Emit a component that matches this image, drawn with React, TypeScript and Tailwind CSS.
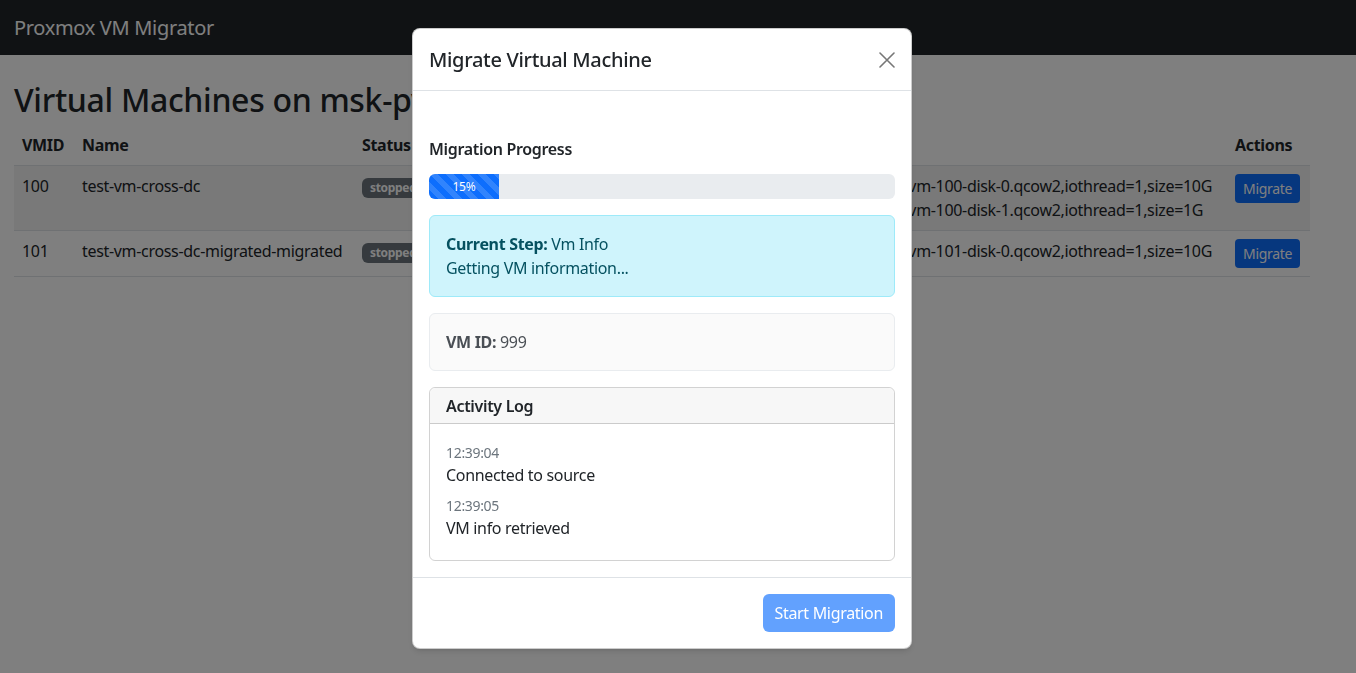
const vms = [
  {
    id: "100",
    name: "test-vm-cross-dc",
    status: "stopped",
    memory: "2048 MB",
    disks: [
      "scsi0: local:100/vm-100-disk-0.qcow2,iothread=1,size=10G",
      "scsi1: local:100/vm-100-disk-1.qcow2,iothread=1,size=1G",
    ],
  },
  {
    id: "101",
    name: "test-vm-cross-dc-migrated-migrated",
    status: "stopped",
    memory: "2048 MB",
    disks: ["scsi0: local:101/vm-101-disk-0.qcow2,iothread=1,size=10G"],
  },
];

const logs = [
  { time: "12:39:04", text: "Connected to source" },
  { time: "12:39:05", text: "VM info retrieved" },
];

function VmTable() {
  return (
    <table className="w-[1296px] table-fixed border-collapse text-left text-[#212529]">
      <colgroup>
        <col className="w-[60px]" />
        <col className="w-[280px]" />
        <col className="w-[110px]" />
        <col className="w-[120px]" />
        <col />
        <col className="w-[83px]" />
      </colgroup>
      <thead>
        <tr className="border-b border-[#dee2e6]">
          <th className="p-2 font-bold">VMID</th>
          <th className="p-2 font-bold">Name</th>
          <th className="p-2 font-bold">Status</th>
          <th className="p-2 font-bold">Memory</th>
          <th className="p-2 font-bold">Disks</th>
          <th className="p-2 font-bold">Actions</th>
        </tr>
      </thead>
      <tbody>
        {vms.map((vm, i) => (
          <tr key={vm.id} className={"border-b border-[#dee2e6] align-top " + (i % 2 === 0 ? "bg-[#f2f2f2]" : "")}>
            <td className="p-2">{vm.id}</td>
            <td className="p-2 whitespace-nowrap">{vm.name}</td>
            <td className="p-2">
              <span className="inline-block rounded-md bg-[#6c757d] px-[8px] py-[4px] text-[12px] font-bold leading-none text-white">
                {vm.status}
              </span>
            </td>
            <td className="p-2">{vm.memory}</td>
            <td className="p-2 pr-[15px] text-right whitespace-nowrap">
              <div className="inline-block text-left">
                {vm.disks.map((d) => (
                  <div key={d} className="leading-6">{d}</div>
                ))}
              </div>
            </td>
            <td className="p-2">
              <button className="rounded bg-[#0d6efd] px-2 py-1 text-sm leading-[21px] text-white">Migrate</button>
            </td>
          </tr>
        ))}
      </tbody>
    </table>
  );
}

function MigrateModal() {
  return (
    <div className="fixed inset-0 bg-black/50">
      <div className="ml-[412px] mt-[28px] w-[500px] rounded-lg border border-black/20 bg-white text-[#212529] shadow-md">
        {/* header */}
        <div className="flex h-[62px] items-center justify-between border-b border-[#dee2e6] px-4">
          <h5 className="text-xl font-medium">Migrate Virtual Machine</h5>
          <button className="text-[#777]">
            <svg width="16" height="16" viewBox="0 0 16 16" fill="none" stroke="currentColor" strokeWidth="1.6" strokeLinecap="round">
              <path d="M1 1L15 15M15 1L1 15" />
            </svg>
          </button>
        </div>

        {/* body */}
        <div className="px-4 pb-4 pt-[49px]">
          <h6 className="mb-[15px] text-base font-semibold leading-[19px]">Migration Progress</h6>
          <div className="mb-4 flex h-[25px] overflow-hidden rounded-md bg-[#e9ecef]">
            <div className="flex w-[15%] items-center justify-center bg-[#0d6efd] bg-[linear-gradient(45deg,rgba(255,255,255,.15)_25%,transparent_25%,transparent_50%,rgba(255,255,255,.15)_50%,rgba(255,255,255,.15)_75%,transparent_75%,transparent)] bg-[length:16px_16px] text-xs text-white">
              15%
            </div>
          </div>
          <div className="mb-4 rounded-md border border-[#9eeaf9] bg-[#cff4fc] p-4 leading-6 text-[#055160]">
            <div>
              <strong className="font-bold">Current Step:</strong> Vm Info
            </div>
            <div>Getting VM information...</div>
          </div>
          <div className="mb-4 rounded-md border border-[#e9ecef] bg-[#fafafa] p-4 leading-6 text-[#4a4f55]">
            <strong className="font-bold">VM ID:</strong> 999
          </div>
          <div className="rounded-md border border-black/[0.175]">
            <div className="rounded-t-md border-b border-black/[0.175] bg-[#f7f7f7] px-4 pb-[7px] pt-[9px]">
              <h6 className="text-base font-semibold leading-[19px]">Activity Log</h6>
            </div>
            <div className="px-4 pb-[20px] pt-[18px]">
              {logs.map((l, i) => (
                <div key={l.time} className={i < logs.length - 1 ? "mb-2" : ""}>
                  <div className="text-sm leading-[21px] text-[#6c757d]">{l.time}</div>
                  <div className="leading-6">{l.text}</div>
                </div>
              ))}
            </div>
          </div>
        </div>

        {/* footer */}
        <div className="flex justify-end border-t border-[#dee2e6] p-4">
          <button disabled className="h-[38px] rounded-md bg-[#62a1fe] px-3 text-base text-white">
            Start Migration
          </button>
        </div>
      </div>
    </div>
  );
}

export default function App() {
  return (
    <div className="min-h-[673px] bg-white font-['Noto_Sans',sans-serif] text-base tracking-[-0.02em] text-[#212529]">
      <nav className="flex h-[55px] items-center bg-[#212529] px-[14px]">
        <span className="text-xl text-white">Proxmox VM Migrator</span>
      </nav>
      <main className="px-[14px] pt-[26px]">
        <h2 className="mb-[6px] text-[32px] font-medium leading-[38px]">Virtual Machines on msk-pve01</h2>
        <VmTable />
      </main>
      <MigrateModal />
    </div>
  );
}
